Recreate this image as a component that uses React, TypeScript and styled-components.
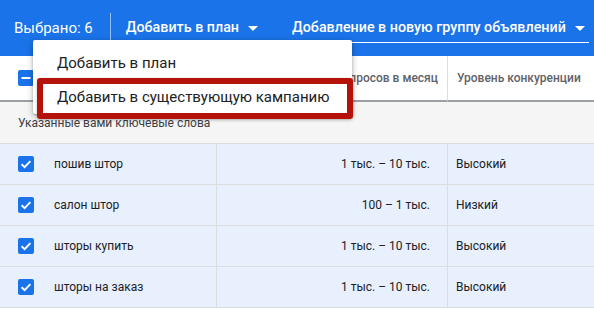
import * as React from "react";
import styled, { createGlobalStyle } from "styled-components";

const COLOR = {
  blue: "#1a73e8",
  text: "#202124",
  sub: "#5f6368",
  border: "#dadce0",
  selected: "#e8f0fe",
  group: "#f5f5f5",
  mark: "#b5120a",
};

type Keyword = {
  name: string;
  volume: string;
  competition: string;
};

const keywords: Keyword[] = [
  { name: "пошив штор", volume: "1 тыс. – 10 тыс.", competition: "Высокий" },
  { name: "салон штор", volume: "100 – 1 тыс.", competition: "Низкий" },
  { name: "шторы купить", volume: "1 тыс. – 10 тыс.", competition: "Высокий" },
  { name: "шторы на заказ", volume: "1 тыс. – 10 тыс.", competition: "Высокий" },
];

const GlobalStyle = createGlobalStyle`
  html, body {
    margin: 0;
    padding: 0;
    background: #fff;
  }
  body {
    font-family: Roboto, "Liberation Sans", sans-serif;
    color: ${COLOR.text};
  }
`;

function Caret() {
  return (
    <CaretSvg width="10" height="5" viewBox="0 0 10 5">
      <path d="M0 0 L10 0 L5 5 Z" fill="#fff" />
    </CaretSvg>
  );
}

function Check(props: { mode: "check" | "minus" }) {
  return (
    <Box>
      <svg width="16" height="16" viewBox="0 0 16 16">
        {props.mode === "check" ? (
          <path d="M3.6 8.2 L6.6 11.1 L12.4 5.2" fill="none" stroke="#fff" strokeWidth="1.9" />
        ) : (
          <path d="M3.5 8 H12.5" fill="none" stroke="#fff" strokeWidth="2" />
        )}
      </svg>
    </Box>
  );
}

export default function App() {
  return (
    <>
      <GlobalStyle />
      <Page>
        <TopBar>
          <Selected>Выбрано: 6</Selected>
          <Divider />
          <Action>
            Добавить в план
            <Caret />
          </Action>
          <Action $underlined>
            Добавление в новую группу объявлений
            <Caret />
          </Action>
        </TopBar>

        <Table>
          <HeadCell>
            <Check mode="minus" />
            <span>Ключевое слово</span>
          </HeadCell>
          <HeadCell $align="right" $divider>
            Среднее число запросов в месяц
          </HeadCell>
          <HeadCell $divider>Уровень конкуренции</HeadCell>

          <GroupRow>Указанные вами ключевые слова</GroupRow>

          {keywords.map((k) => (
            <React.Fragment key={k.name}>
              <Cell>
                <Check mode="check" />
                <span>{k.name}</span>
              </Cell>
              <Cell $align="right" $divider>
                {k.volume}
              </Cell>
              <Cell $divider>{k.competition}</Cell>
            </React.Fragment>
          ))}
        </Table>

        <Menu>
          <MenuItem>Добавить в план</MenuItem>
          <MenuItem>Добавить в существующую кампанию</MenuItem>
          <Highlight />
        </Menu>
      </Page>
    </>
  );
}

const Page = styled.div`
  position: relative;
  width: 594px;
  height: 310px;
  overflow: hidden;
  background: #fff;
`;

const TopBar = styled.div`
  display: flex;
  align-items: center;
  height: 56px;
  padding-left: 14px;
  background: ${COLOR.blue};
  color: #fff;
  white-space: nowrap;
`;

const Selected = styled.div`
  flex: none;
  font-size: 15px;
  padding-bottom: 1px;
`;

const Divider = styled.div`
  flex: none;
  width: 1px;
  height: 30px;
  margin: 0 15px 0 17px;
  background: rgba(255, 255, 255, 0.55);
`;

const Action = styled.div<{ $underlined?: boolean }>`
  flex: none;
  display: flex;
  align-items: center;
  gap: 9px;
  height: 29px;
  margin: 0 30px 0 0;
  font-size: 14.3px;
  font-weight: 500;
  box-sizing: border-box;
  padding: 0 4px 1px 0;
  border-bottom: 1px solid ${(p) => (p.$underlined ? "#fff" : "transparent")};
  &:last-child {
    margin-right: 0;
  }
`;

const CaretSvg = styled.svg`
  display: block;
  margin-top: 2px;
`;

const Table = styled.div`
  display: grid;
  grid-template-columns: 216px 231px 1fr;
  font-size: 12px;
`;

const HeadCell = styled.div<{ $align?: "right"; $divider?: boolean }>`
  display: flex;
  align-items: center;
  justify-content: ${(p) => (p.$align === "right" ? "flex-end" : "flex-start")};
  gap: 20px;
  height: 44px;
  padding: 0 9px 0 ${(p) => (p.$divider ? "9px" : "18px")};
  border-bottom: 2px solid #9aa0a6;
  border-left: ${(p) => (p.$divider ? `1px solid ${COLOR.border}` : "none")};
  font-size: 12px;
  font-weight: 500;
  color: ${COLOR.sub};
  white-space: nowrap;
  overflow: hidden;
`;

const GroupRow = styled.div`
  grid-column: 1 / -1;
  display: flex;
  align-items: center;
  height: 41px;
  padding-left: 18px;
  background: ${COLOR.group};
  border-bottom: 1px solid ${COLOR.border};
  font-size: 12px;
  color: #3c4043;
`;

const Cell = styled.div<{ $align?: "right"; $divider?: boolean }>`
  display: flex;
  align-items: center;
  justify-content: ${(p) => (p.$align === "right" ? "flex-end" : "flex-start")};
  gap: 20px;
  height: 40px;
  padding: 0 ${(p) => (p.$align === "right" ? "17px" : "9px")} 0
    ${(p) => (p.$divider ? "8px" : "18px")};
  background: ${COLOR.selected};
  border-bottom: 1px solid ${COLOR.border};
  border-left: ${(p) => (p.$divider ? `1px solid ${COLOR.border}` : "none")};
  color: ${COLOR.text};
  white-space: nowrap;
`;

const Box = styled.div`
  flex: none;
  width: 16px;
  height: 16px;
  border-radius: 2px;
  background: ${COLOR.blue};
  svg {
    display: block;
  }
`;

const Menu = styled.div`
  position: absolute;
  top: 40px;
  left: 33px;
  width: 319px;
  padding: 6px 0 0;
  background: #fff;
  border-radius: 2px;
  box-shadow: 0 2px 6px rgba(0, 0, 0, 0.3), 0 1px 2px rgba(0, 0, 0, 0.2);
`;

const MenuItem = styled.div`
  height: 34px;
  display: flex;
  align-items: center;
  padding-left: 24px;
  font-size: 15px;
  color: ${COLOR.text};
`;

const Highlight = styled.div`
  position: absolute;
  left: 4px;
  top: 38px;
  width: 316px;
  height: 41px;
  box-sizing: border-box;
  border: 6px solid ${COLOR.mark};
  border-radius: 3px;
  box-shadow: 0 1px 3px rgba(0, 0, 0, 0.25);
`;
